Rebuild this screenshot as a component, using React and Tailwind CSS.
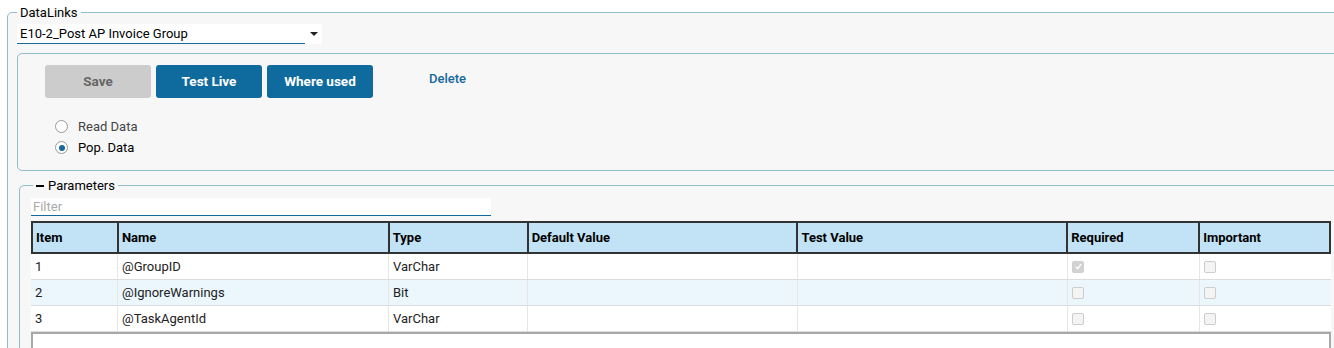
import { useState } from "react";

const columns = [
  { key: "item", label: "Item", w: "w-[86px]", hw: "w-[84px]" },
  { key: "name", label: "Name", w: "w-[271px]", hw: "w-[271px]" },
  { key: "type", label: "Type", w: "w-[139px]", hw: "w-[139px]" },
  { key: "def", label: "Default Value", w: "w-[270px]", hw: "w-[270px]" },
  { key: "test", label: "Test Value", w: "w-[270px]", hw: "w-[270px]" },
  { key: "req", label: "Required", w: "w-[132px]", hw: "w-[132px]" },
  { key: "imp", label: "Important", w: "w-[131px]", hw: "w-[131px]" },
];

const rows = [
  { item: 1, name: "@GroupID", type: "VarChar", req: true },
  { item: 2, name: "@IgnoreWarnings", type: "Bit", req: false },
  { item: 3, name: "@TaskAgentId", type: "VarChar", req: false },
];

function Check({ checked }) {
  return (
    <span
      className={
        "flex h-[12px] w-[12px] items-center justify-center rounded-[2px] border " +
        (checked ? "border-[#cfcfcf] bg-[#d3d3d3]" : "border-[#cdcdcd] bg-[#f4f4f4]")
      }
    >
      {checked && (
        <svg viewBox="0 0 12 12" className="h-[9px] w-[9px]">
          <path d="M2.5 6.3 L5 8.8 L9.5 2.8" fill="none" stroke="#fff" strokeWidth="1.8" />
        </svg>
      )}
    </span>
  );
}

function Radio({ label, checked, onClick }) {
  return (
    <label className="flex h-[21px] cursor-pointer items-center" onClick={onClick}>
      <span className="flex h-[13px] w-[13px] items-center justify-center rounded-full border-[1.5px] border-[#9a9a9a] bg-white">
        {checked && <span className="h-[6px] w-[6px] rounded-full bg-[#16699c]" />}
      </span>
      <span className={"ml-[10px] text-[13px] " + (checked ? "text-black" : "text-[#444]")}>{label}</span>
    </label>
  );
}

export default function App() {
  const [mode, setMode] = useState("pop");
  const [filter, setFilter] = useState("");

  return (
    <div
      className="h-[348px] w-[1334px] overflow-hidden bg-white text-[#222]"
      style={{ fontFamily: "Roboto, 'Liberation Sans', sans-serif" }}
    >
      {/* DataLinks */}
      <fieldset className="ml-[7px] mt-[5px] w-[1400px] rounded-tl-[5px] border border-[#8fbfca] bg-[#f7f7f7] pb-[20px] pl-[9px]">
        <legend className="h-[15px] px-[3px] text-[13px] leading-[15px] text-black">DataLinks</legend>

        <div className="mt-[4px] flex h-[20px] w-[305px] items-center bg-white">
          <div className="flex h-[20px] w-[288px] items-center border-b border-[#16699c] pl-[3px] text-[13px] text-black">
            E10-2_Post AP Invoice Group
          </div>
          <svg viewBox="0 0 8 4" className="ml-[5px] h-[4px] w-[8px]">
            <path d="M0 0 L8 0 L4 4 Z" fill="#222" />
          </svg>
        </div>

        <div className="mt-[9px] h-[118px] rounded-[5px] border border-[#8fbfca] bg-[#f7f7f7] pl-[27px] pt-[11px]">
          <div className="flex items-start gap-[5px]">
            <button className="h-[33px] w-[106px] rounded-[3px] bg-[#cccccc] text-[13.5px] font-bold text-[#666]">
              Save
            </button>
            <button className="h-[33px] w-[106px] rounded-[3px] bg-[#0f6a9d] text-[13.5px] font-bold text-white">
              Test Live
            </button>
            <button className="h-[33px] w-[106px] rounded-[3px] bg-[#0f6a9d] text-[13.5px] font-bold text-white">
              Where used
            </button>
            <button className="ml-[51px] mt-[4px] text-[13px] font-medium text-[#16699c]">Delete</button>
          </div>
          <div className="ml-[10px] mt-[18px]">
            <Radio label="Read Data" checked={mode === "read"} onClick={() => setMode("read")} />
            <Radio label="Pop. Data" checked={mode === "pop"} onClick={() => setMode("pop")} />
          </div>
        </div>

        {/* Parameters */}
        <fieldset className="ml-[2px] mt-[7px] rounded-tl-[5px] border border-[#8fbfca] pl-[11px]">
          <legend className="ml-[2px] flex h-[15px] items-center px-[3px] text-[13px] leading-[15px] text-black">
            <span className="mr-[4px] inline-block h-[2px] w-[8px] bg-black" />
            Parameters
          </legend>

          <input
            value={filter}
            onChange={(e) => setFilter(e.target.value)}
            placeholder="Filter"
            className="mt-[5px] block h-[18px] w-[460px] border-b border-[#0f6a9d] bg-white pl-[2px] text-[13px] text-black outline-none placeholder:text-[#aaa]"
          />

          <div className="mt-[5px] w-[1300px]">
            <div className="flex h-[33px] border-2 border-[#333] bg-[#c2e3f5]">
              {columns.map((c, i) => (
                <div
                  key={c.key}
                  className={
                    c.hw +
                    " flex items-center pl-[3px] text-[13px] font-bold text-black " +
                    (i > 0 ? "border-l-2 border-[#333]" : "")
                  }
                >
                  {c.label}
                </div>
              ))}
            </div>
            {rows
              .filter((r) => r.name.toLowerCase().includes(filter.toLowerCase()))
              .map((r, ri) => (
                <div
                  key={r.item}
                  className={
                    "flex h-[26px] border-b border-[#dcdcdc] text-[13px] " +
                    (ri % 2 === 1 ? "bg-[#ebf6fd]" : "bg-white")
                  }
                >
                  {columns.map((c, i) => (
                    <div
                      key={c.key}
                      className={
                        c.w +
                        " flex items-center pl-[4px] " +
                        (i > 0 ? "border-l border-[#e6e6e6]" : "")
                      }
                    >
                      {c.key === "req" ? (
                        <Check checked={r.req} />
                      ) : c.key === "imp" ? (
                        <Check checked={false} />
                      ) : (
                        r[c.key] ?? ""
                      )}
                    </div>
                  ))}
                </div>
              ))}
            <div className="h-[40px] border-2 border-b-0 border-[#a8a8a8] bg-white" />
          </div>
        </fieldset>
      </fieldset>
    </div>
  );
}
